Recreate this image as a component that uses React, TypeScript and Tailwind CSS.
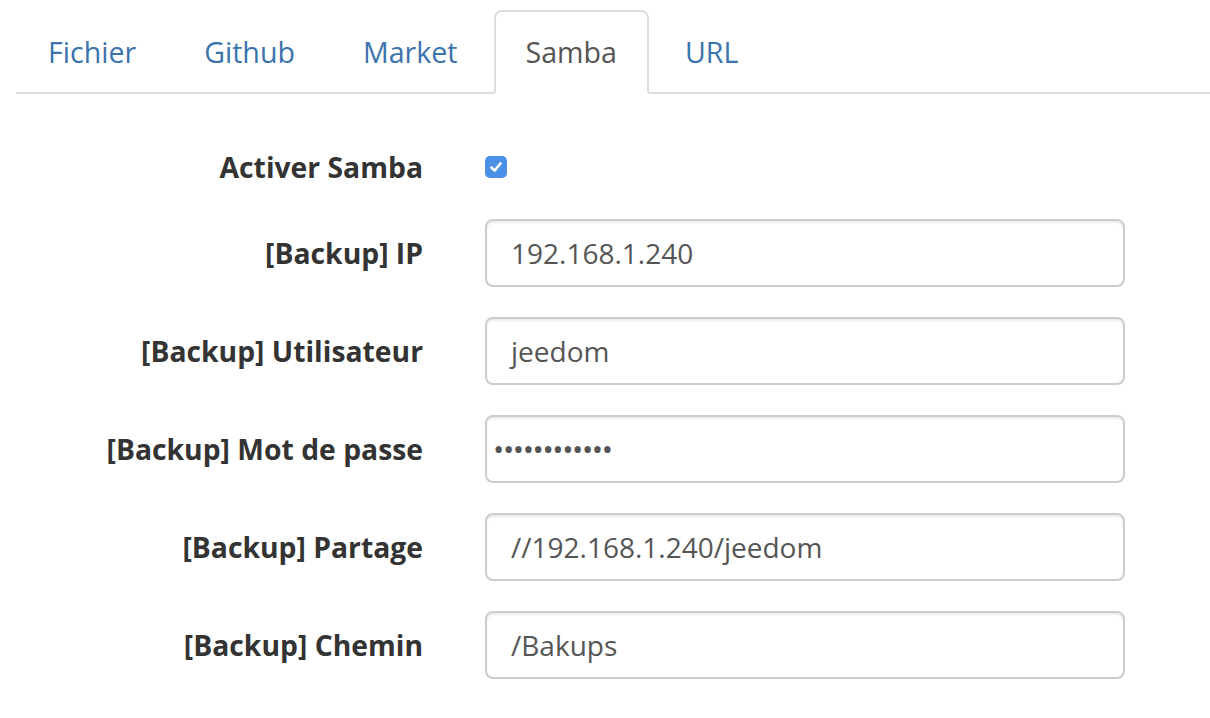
import React from "react";

const tabs = ["Fichier", "Github", "Market", "Samba", "URL"];

const fields: { label: string; value: string; password?: boolean }[] = [
  { label: "[Backup] IP", value: "192.168.1.240" },
  { label: "[Backup] Utilisateur", value: "jeedom" },
  { label: "[Backup] Mot de passe", value: "••••••••••••", password: true },
  { label: "[Backup] Partage", value: "//192.168.1.240/jeedom" },
  { label: "[Backup] Chemin", value: "/Bakups" },
];

export default function App() {
  return (
    <div
      className="w-[1210px] h-[718px] bg-white overflow-hidden pl-[16px]"
      style={{ fontFamily: '"Open Sans", "Liberation Sans", sans-serif' }}
    >
      <ul className="flex mt-[10px] border-b-2 border-[#ddd]">
        {tabs.map((t) => {
          const active = t === "Samba";
          return (
            <li key={t} className="mb-[-2px] mr-[4px]">
              <a
                className={
                  active
                    ? "block px-[30px] py-[20px] leading-[40px] text-[28.6px] border-2 border-[#ddd] border-b-white rounded-t-[8px] bg-white text-[#555]"
                    : "block px-[30px] py-[20px] leading-[40px] text-[28.6px] border-2 border-transparent rounded-t-[8px] text-[#3b73ad]"
                }
              >
                {t}
              </a>
            </li>
          );
        })}
      </ul>

      <div className="pt-[39px] flex flex-col">
        <div className="flex items-center h-[68px] mb-[18px]">
          <div className="w-[407px] text-right text-[28.3px] font-bold text-[#333]">
            Activer Samba
          </div>
          <div className="ml-[62px] w-[22px] h-[22px] rounded-[5px] bg-[#4a90e6] flex items-center justify-center">
            <svg width="16" height="16" viewBox="0 0 16 16" fill="none">
              <path
                d="M3.5 8.5 L6.6 11.6 L12.5 4.5"
                stroke="white"
                strokeWidth="2.6"
                strokeLinecap="round"
                strokeLinejoin="round"
              />
            </svg>
          </div>
        </div>
        <div className="flex flex-col gap-[30px]">
          {fields.map((f) => (
            <div key={f.label} className="flex items-center h-[68px]">
              <div className="w-[407px] text-right text-[28.3px] font-bold text-[#333]">
                {f.label}
              </div>
              <div className="ml-[62px] w-[640px] h-[68px] border-2 border-[#ccc] rounded-[8px] shadow-[inset_0_2px_2px_rgba(0,0,0,0.075)] flex items-center">
                {f.password ? (
                  <span className="pl-[6px] text-[30px] leading-none tracking-[-1.4px] text-[#555]">
                    {f.value}
                  </span>
                ) : (
                  <span className="pl-[24px] text-[28px] text-[#555]">
                    {f.value}
                  </span>
                )}
              </div>
            </div>
          ))}
        </div>
      </div>
    </div>
  );
}
